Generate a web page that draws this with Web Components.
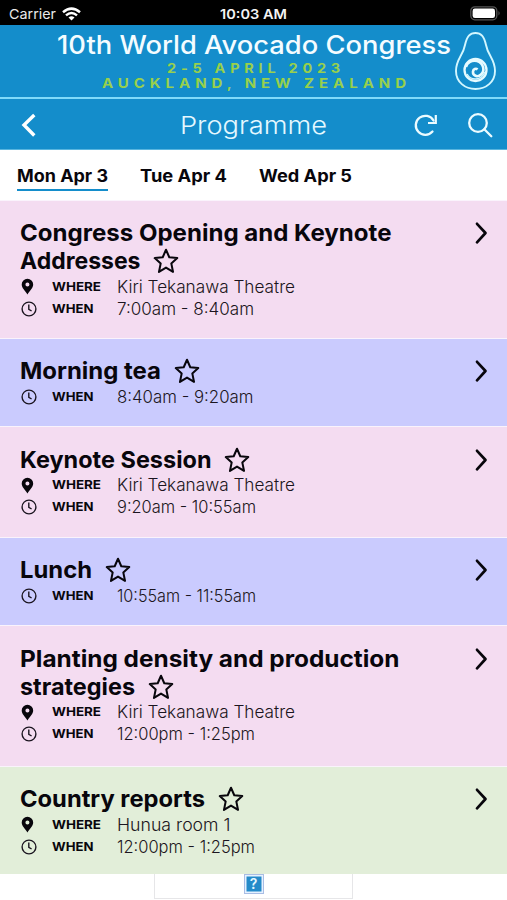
<!DOCTYPE html>
<html lang="en">
<head>
<meta charset="utf-8">
<title>Programme</title>
<style>
html,body{margin:0;height:100%;overflow:hidden;background:#fff}
body{font-family:Inter,"Liberation Sans",sans-serif;color:#08060c}
</style>
</head>
<body>
<congress-app></congress-app>
<script>
const define = (name, html, setup) => customElements.define(name, class extends HTMLElement {
  connectedCallback() {
    if (this.shadowRoot) return;
    const t = document.createElement('template');
    t.innerHTML = html;
    this.attachShadow({mode: 'open'}).append(t.content.cloneNode(true));
    if (setup) setup(this, this.shadowRoot);
  }
});

// One line of text, stretched horizontally to the width given in "w".
define('fit-text', `<style>
:host{display:block;flex:none;white-space:nowrap}
span{display:inline-block;transform-origin:0 50%;white-space:pre}
</style><span></span>`, (el, root) => {
  const s = root.querySelector('span'), w = +el.getAttribute('w');
  s.textContent = el.getAttribute('text');
  el.style.width = w + 'px';
  s.style.transform = 'scaleX(' + w / s.getBoundingClientRect().width + ')';
});

define('status-bar', `<style>
:host{display:grid;grid-template-columns:1fr auto 1fr;align-items:center;height:25px;padding:2px 6px 0 9px;box-sizing:border-box;background:#000;color:#e9e9e9;font-size:13.5px}
div{display:flex;align-items:center;gap:6px}
.e{justify-content:flex-end}
fit-text{line-height:22px}
.t{font-weight:600;color:#f4f4f4;margin-left:-3px}
svg{display:block}
</style>
<div><fit-text text="Carrier" w="47"></fit-text>
<svg width="19" height="14" viewBox="0 0 19 14" fill="none" stroke="#fff" stroke-width="2.500"><path d="M1 5.200Q9.500-2 18 5.200M4 8.400Q9.500 3.700 15 8.400"/><path d="M9.500 13.500 6.500 10.400Q9.500 8 12.500 10.400Z" fill="#fff" stroke="none"/></svg></div>
<fit-text class="t" text="10:03 AM" w="67"></fit-text>
<div class="e"><svg width="31" height="15" viewBox="0 0 31 15"><rect x=".8" y=".8" width="26" height="13" rx="4" fill="none" stroke="#555" stroke-width="1.300"/><rect x="2.600" y="2.600" width="22.400" height="9.400" rx="2.300" fill="#fff"/><path d="M28.500 5q2.200 2.200 0 4.600z" fill="#555"/></svg></div>`);

define('congress-banner', `<style>
:host{display:flex;height:74px;box-sizing:border-box;background:#148dcb;border-bottom:2px solid #80dafa;padding-left:57px}
.c{width:394px;display:flex;flex-direction:column;align-items:center;flex:none}
.a{font-size:25.5px;line-height:28px;color:#f4fcff;font-weight:450;margin-top:6px}
.b,.d{font-size:13.2px;line-height:15px;font-weight:650;color:#98d04c;letter-spacing:4.3px}
.b{margin-top:1.5px;margin-left:3px}.d{margin-left:4px;margin-top:.5px}
svg{display:block;margin:6px 0 0 3px}
</style>
<div class="c"><fit-text class="a" text="10th World Avocado Congress" w="394"></fit-text>
<fit-text class="b" text="2-5 APRIL 2023" w="178"></fit-text>
<fit-text class="d" text="AUCKLAND, NEW ZEALAND" w="309"></fit-text></div>
<svg width="44" height="60" viewBox="0 0 44 60" fill="none" stroke="#d3f7ff">
<path d="M11 14C13 5 16 2 21.500 2S30 5 32 14C34 25 41 28 41 40C41 51 32 58 21.500 58S2 51 2 40C2 28 9 25 11 14Z" stroke-width="1.900"/>
<circle cx="21.500" cy="39" r="11" stroke-width="2.300" stroke="#e7fbff"/>
<path d="M12 36C13 31 18 29 23 30C30 32 31 40 27 43.500C23.500 47 18.500 44.500 19 40.500C19.300 38 22 37 23.500 38.500" stroke-width="2.600" stroke="#e7fbff"/>
<path d="M13 43C17 50 27 50 31 41" stroke-width="1.500"/>
</svg>`);

define('nav-bar', `<style>
:host{display:grid;grid-template-columns:1fr 147px 1fr;align-items:center;height:51px;box-sizing:border-box;background:#148dcb;border-bottom:1px solid #58b5df;color:#e5f8ff;padding:0 14px 0 20px}
.t{font-size:24px;line-height:50px;font-weight:300;margin:2px 0 0 -3px}
.e{display:flex;justify-content:flex-end;gap:29px}
svg{display:block;fill:none;stroke:#ecfbff;stroke-width:2.3}
</style>
<svg width="18" height="26" viewBox="0 0 18 26" style="stroke-width:3.4;stroke:#fff"><path d="M14.300 3 4 13 14.300 23.500"/></svg>
<fit-text class="t" text="Programme" w="147"></fit-text>
<div class="e"><svg width="24" height="26" viewBox="0 0 24 26"><path d="M18.500 19.500A9.500 9.500 0 1 1 19.500 8.500" stroke-linecap="round"/><path d="M21.800 3V11H14" stroke-width="2.200"/></svg>
<svg width="26" height="26" viewBox="0 0 26 26"><circle cx="11" cy="11" r="8.800"/><path d="m17.300 17.300 7 7" stroke-linecap="round"/></svg></div>`);

define('day-tab', `<style>
:host{display:block;box-sizing:border-box;height:41px;padding-top:14px;font-size:17px;line-height:24px;font-weight:700}
:host([active]){border-bottom:2px solid #148dcb}
</style><slot></slot>`);

define('day-tabs', `<style>
:host{display:flex;height:50px;padding-left:17px;background:#fff;box-sizing:border-box;gap:32px;align-items:flex-start}
</style>
<day-tab active><fit-text text="Mon Apr 3" w="91"></fit-text></day-tab>
<day-tab><fit-text text="Tue Apr 4" w="87"></fit-text></day-tab>
<day-tab><fit-text text="Wed Apr 5" w="93"></fit-text></day-tab>`);

const PIN = '<svg width="17" height="17" viewBox="0 0 16 16"><path fill-rule="evenodd" d="M7 .8A5.400 5.400 0 0 0 1.600 6.200C1.600 9.400 4.700 12 7 15.600C9.300 12 12.400 9.400 12.400 6.200A5.400 5.400 0 0 0 7 .8ZM7 4.300A1.900 1.900 0 1 1 7 8.100A1.900 1.900 0 1 1 7 4.300Z" fill="#08060c"/></svg>';
const CLOCK = '<svg width="18" height="18" viewBox="0 0 18 18" fill="none" stroke="#1b1520"><circle cx="9" cy="9" r="6.900" stroke-width="1.400"/><path d="M8.800 4.500V9.300L11.600 11" stroke-width="1.400"/></svg>';
const row = (icon, label, lw, value, vw) =>
  `<div class="r"><span>${icon}</span><fit-text class="l" text="${label}" w="${lw}"></fit-text><fit-text class="v" text="${value}" w="${vw}"></fit-text></div>`;

define('session-card', `<style>
:host{display:flex;flex:none;justify-content:space-between;box-sizing:border-box;border-top:1px solid #faf3fc;padding:18px 18px 0 19.5px}
.m{padding-top:var(--nudge,0)}
.h{display:flex;align-items:center;height:28px;gap:13px;font-size:23.5px;font-weight:650;line-height:28px}
.r{display:grid;grid-template-columns:32.5px 65px 1fr;align-items:center;height:22px;line-height:22px}
.l{font-size:12.3px;font-weight:700}
.v{font-size:17px;font-weight:300;color:#1b1520}
.h + .r{margin-top:.7px}
svg{display:block}
.go{margin-top:calc(2px + var(--nudge,0px))}
</style><div class="m"></div>
<svg class="go" width="16" height="24" viewBox="0 0 16 24" fill="none" stroke="#08060c" stroke-width="2.700" stroke-linecap="round" stroke-linejoin="round"><path d="M4 2.800 12.500 12 4 21.300"/></svg>`, (el, root) => {
  const s = el.session;
  el.style.background = s.color;
  el.style.height = s.height + 'px';
  if (s.nudge) el.style.setProperty('--nudge', s.nudge + 'px');
  const star = '<svg width="26" height="26" viewBox="0 0 27 27" fill="none" stroke="#08060c" stroke-width="2.100" stroke-linejoin="round"><path d="M13.500 1.800 16.900 9.600 25.200 10.500 19 16 20.800 24.800 13.500 20.300 6.200 24.800 8 16 1.800 10.500 10.100 9.600Z"/></svg>';
  root.querySelector('.m').innerHTML =
    s.lines.map(([t, w], i) => `<div class="h"><fit-text text="${t}" w="${w}"></fit-text>${i === s.lines.length - 1 ? star : ''}</div>`).join('')
    + (s.where ? row(PIN, 'WHERE', 49, ...s.where) : '')
    + row(CLOCK, 'WHEN', 41.5, ...s.when);
});

define('session-list', `<style>:host{display:flex;flex-direction:column}</style>`, (el, root) => {
  const pink = '#f4dcf1', blue = '#cacbfe', green = '#e2eed9', kiri = ['Kiri Tekanawa Theatre', 178];
  [
    {height: 138, color: pink, lines: [['Congress Opening and Keynote', 371.5], ['Addresses', 120.5]], where: kiri, when: ['7:00am - 8:40am', 137]},
    {height: 88, color: blue, lines: [['Morning tea', 141]], when: ['8:40am - 9:20am', 136.5]},
    {height: 111, color: pink, nudge: .7, lines: [['Keynote Session', 191.5]], where: kiri, when: ['9:20am - 10:55am', 139]},
    {height: 88, color: blue, lines: [['Lunch', 72]], when: ['10:55am - 11:55am', 139]},
    {height: 140.5, color: pink, nudge: .7, lines: [['Planting density and production', 379.5], ['strategies', 115]], where: kiri, when: ['12:00pm - 1:25pm', 138]},
    {height: 108.5, color: green, nudge: .7, lines: [['Country reports', 185]], where: ['Hunua room 1', 113.5], when: ['12:00pm - 1:25pm', 138]}
  ].forEach(s => {
    const c = document.createElement('session-card');
    c.session = s;
    root.append(c);
  });
});

define('ad-slot', `<style>
:host{display:flex;justify-content:center;box-sizing:border-box;width:199px;height:25px;margin:0 auto;border:1px solid #e6e6e8;border-top:0}
span{box-sizing:border-box;width:20px;height:20px;border:1px solid #a9bde4;box-shadow:inset 0 0 0 1.500px #e6f1ff;background:#248bc9;color:#e4f7ff;font-size:14px;font-weight:600;line-height:18px;text-align:center}
</style><span>?</span>`);

define('congress-app', `<style>:host{display:flex;flex-direction:column;width:507px;height:900px;overflow:hidden}
:host>*{flex:none}ad-slot{flex:none}</style>
<status-bar></status-bar><congress-banner></congress-banner><nav-bar></nav-bar><day-tabs></day-tabs><session-list></session-list><ad-slot></ad-slot>`);
</script>
</body>
</html>
